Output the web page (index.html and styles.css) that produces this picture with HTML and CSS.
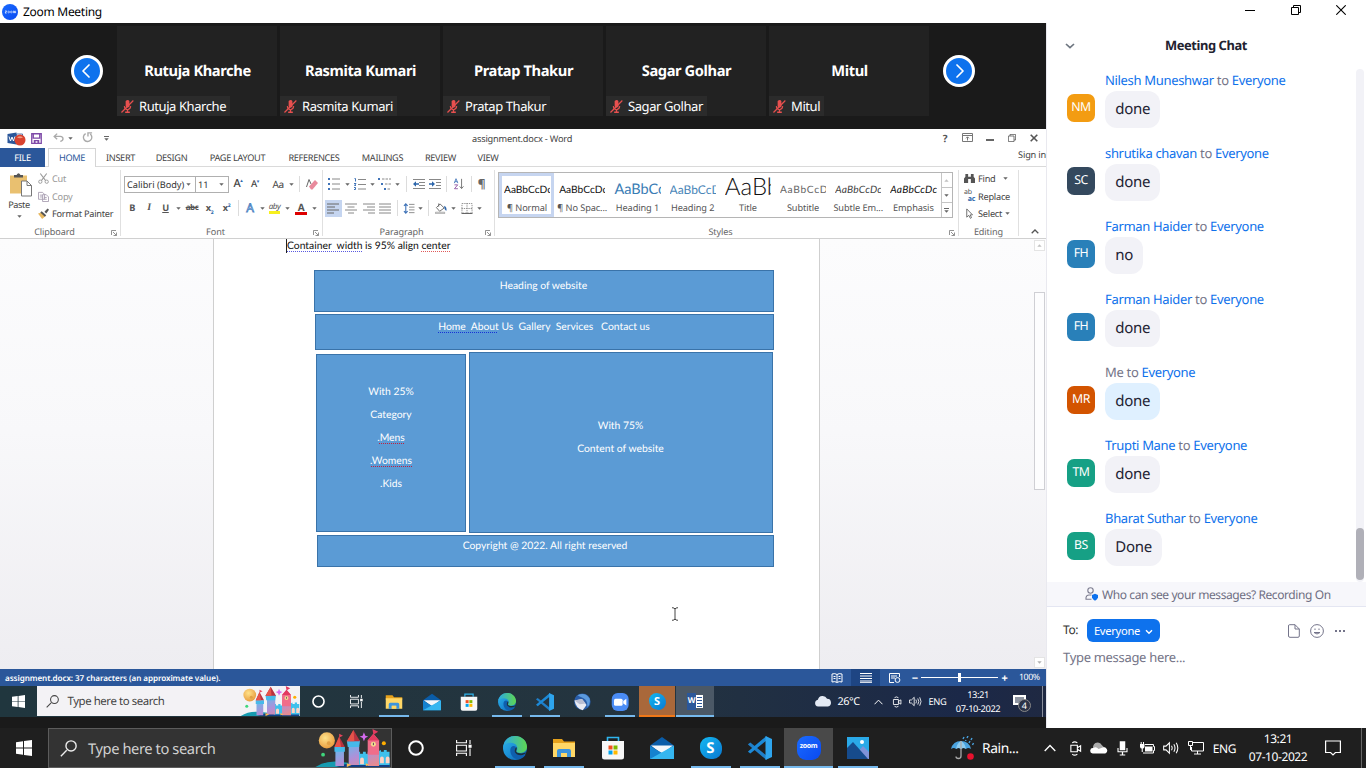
FILE: index.html
```html
<!DOCTYPE html>
<html lang="en">
<head>
<meta charset="utf-8">
<title>Zoom Meeting</title>
<link rel="stylesheet" href="styles.css">
</head>
<body>
<svg class="sprite" aria-hidden="true">
  <defs>
    <linearGradient id="gEdge" x1="0" y1="0" x2="1" y2="1"><stop offset="0" stop-color="#2fb4e8"/><stop offset=".5" stop-color="#1b8fd6"/><stop offset="1" stop-color="#0d57a5"/></linearGradient>
    <linearGradient id="gEdge2" x1="0" y1="0" x2="1" y2="0"><stop offset="0" stop-color="#2aa9e6"/><stop offset="1" stop-color="#5fd650"/></linearGradient>
    <linearGradient id="gZoom" x1="0" y1="0" x2="1" y2="1"><stop offset="0" stop-color="#1a6bff"/><stop offset="1" stop-color="#0a49f0"/></linearGradient>
    <linearGradient id="gTower" x1="0" y1="0" x2="1" y2="1"><stop offset="0" stop-color="#5bc0ef"/><stop offset=".5" stop-color="#b08fd8"/><stop offset="1" stop-color="#f08a84"/></linearGradient>
    <radialGradient id="gMoon" cx=".4" cy=".35" r=".7"><stop offset="0" stop-color="#ffe28a"/><stop offset="1" stop-color="#e79a3c"/></radialGradient>
  </defs>
  <symbol id="win" viewBox="0 0 16 16"><path fill="#fff" d="M0 2.3 7 1.3V7.6H0zM8 1.1 16 0V7.6H8zM0 8.4H7V14.7L0 13.7zM8 8.4H16V16L8 14.9z"/></symbol>
  <symbol id="mag" viewBox="0 0 16 16"><path fill="none" stroke="currentColor" stroke-width="1.3" d="M6.3 9.7 .8 15.2M15.2 5.6a4.8 4.8 0 1 1-9.6 0a4.8 4.8 0 1 1 9.6 0"/></symbol>
  <symbol id="ring" viewBox="0 0 16 16"><circle cx="8" cy="8" r="6.8" fill="none" stroke="#fff" stroke-width="2"/></symbol>
  <symbol id="tview" viewBox="0 0 16 16"><path fill="none" stroke="#fff" stroke-width="1.1" d="M.6 0V2.8H10.4V0M.6 5.2H10.4V11H.6zM.6 16V13.3H10.4V16M14 0V4M14 8.5V16"/><path fill="#fff" d="M12.5 4.7H15.6V7.8H12.5z"/></symbol>
  <symbol id="castle" viewBox="0 0 78 40">
    <path fill="#169bb0" d="M0 40Q12 32 30 35T78 36V40z"/><path fill="#123f86" d="M22 40Q40 33 60 35L78 33V40z"/>
    <circle cx="12" cy="12" r="8.5" fill="url(#gMoon)"/><circle cx="14" cy="15" r="2" fill="#e0a045"/>
    <path fill="#3fc0ec" d="M44 24h3v2h3v-2h3v2h3v-2h9l4-2v2h3v-2h3v2h3v14H44z"/><path fill="#ffd2c4" d="M68 36v-5a2 2 0 0 1 4 0v5zM74 36v-5a2 2 0 0 1 4 0v5zM47 37v-5a2 2 0 0 1 4 0v5z"/>
    <path fill="url(#gTower)" d="M21 22h9v17h-9zM35 18h11v20H35zM55 24h12v15H55z"/>
    <path fill="#47b9ea" d="M20 19h11v5H20zM33 12h14l-1 7H34z"/>
    <path fill="#b83240" d="M25 8 31 19H20zM40 1 47 13H33z"/><path fill="#e6534a" d="M25 8 27 19H20zM40 1 41 13H33z"/>
    <path fill="#f06d8a" d="M55 12 61 5 67 12V27H55z"/><path fill="#e23b5f" d="M55 12 61 5 67 12zM60 0l6 3-5 3z"/><path fill="#e8455c" d="M25 5l4 2-4 2z"/>
    <circle cx="61" cy="16" r="2.6" fill="#f5dc8d"/><path stroke="#39305c" stroke-width=".9" d="M61 14.5V17"/>
    <path fill="#d66bf0" d="M51 3.5 52.5 7 55.5 8 52.5 9.5 51 13 49.7 9.5 46.5 8 49.7 7z"/>
    <circle cx="72" cy="15" r="2.1" fill="#ffae00"/><circle cx="8" cy="27" r="2" fill="#3fd77c"/><path fill="#fdbb4c" d="M33 36l5 2-5 2zM53 36l4 2-4 1z"/>
  </symbol>
  <symbol id="edge" viewBox="0 0 24 24"><circle cx="12" cy="12" r="12" fill="url(#gEdge)"/><path fill="url(#gEdge2)" d="M.3 10.5C1.4 4 6.300 0 12 0c7 0 12 5 12 10.800 0 4-3 6.200-6.500 6.200-2.500 0-4.500-1-4-2 1.500-2 1-5.500-1.500-7C8.500 6 2.500 6.500.3 10.500z"/><path fill="#0f5fae" d="M7.300 14C7 19 11 23.700 16 23.300c3-.6 5.500-2.700 6.800-4.800-4 1.500-8.500 1-10.300-1.500-1.500-2-1-4 .5-6C10.500 9 7.500 10.500 7.300 14z"/><path fill="#1d1d1d" fill-opacity=".8" d="M13.300 11c1.500 2-.8 3.500.2 5 2 2 7 1.800 9.700.3-.7 1.700-3 3.200-6 3-3.500-.3-6-2.500-5.500-5.300.2-1.200.8-2.200 1.600-3z"/></symbol>
  <symbol id="folder" viewBox="0 0 24 24"><path fill="#e5a11c" d="M1 3h9l2 2.500h11V9H1z"/><path fill="#ffd766" d="M1 7h22v14H1z"/><path fill="#3d94dc" d="M5 21v-6q0-2 2-2h10q2 0 2 2v6h-4v-4H9v4z"/><path fill="#ffd766" d="M9 17h6v4H9z"/></symbol>
  <symbol id="store" viewBox="0 0 24 24"><path fill="none" stroke="#2fb5ee" stroke-width="1.6" d="M6.500 5V1.500h11V5"/><path fill="#f7f7f7" d="M1 5h22v16q0 2.500-2.500 2.500h-17Q1 23.500 1 21z"/><path fill="#f25022" d="M7.500 9.500h4v4h-4z"/><path fill="#7fba00" d="M12.500 9.500h4v4h-4z"/><path fill="#00a4ef" d="M7.500 14.500h4v4h-4z"/><path fill="#ffb900" d="M12.500 14.500h4v4h-4z"/></symbol>
  <symbol id="mail" viewBox="0 0 24 24"><path fill="#0a5ca8" d="M0 9.500 12 1 24 9.500V13H0z"/><path fill="#f2f6fa" d="M1 9.500h22L12 18z"/><path fill="#1582cf" d="M0 10 13 17.500 24 23H0z"/><path fill="#35b6f0" d="M0 23 24 9.500V23z"/></symbol>
  <symbol id="code" viewBox="0 0 24 24"><path fill="#1f7fc9" d="M0 8.200 2.300 6.500 18.500 19.500V24L.3 8.800z"/><path fill="#1c8ad8" d="M0 15.800 2.300 17.500 18.500 4.500V0L.3 15.200z"/><path fill="#2ea5ee" d="M17.500 0 24 3V21L17.500 24z"/></symbol>
  <symbol id="zoomcam" viewBox="0 0 24 24"><rect x="1" width="22.500" height="24" rx="8" fill="#4a8cf5"/><rect x="4" y="7.500" width="11.500" height="9.500" rx="2" fill="#fff"/><path fill="#fff" d="M16.300 10.500 20.500 7.800V16.700L16.300 14z"/></symbol>
  <symbol id="photos" viewBox="0 0 24 24"><path fill="#2aa9e8" d="M1 1h22v22H1z"/><path fill="#7f92d8" d="M9 19 17 10 23 16V23H9z"/><path fill="#164b8c" d="M1 12 7 6 22 23H1z"/><circle cx="16" cy="6" r="2" fill="#fff"/></symbol>
  <symbol id="bird" viewBox="0 0 24 24"><circle cx="12.500" cy="11.500" r="11" fill="#2a5da8"/><path fill="#5b9ade" d="M6 3Q16-2 22 7q2 7-3 12 1-9-5-12T6 3z"/><path fill="#e8eaf2" d="M2 10 12 8l6 8-5 7Q4 21 2 10z"/><path fill="#b9bed2" d="M2 10l7 5 8-1-5-6z"/></symbol>
  <symbol id="cloud" viewBox="0 0 20 14"><path fill="#e4eaf4" d="M4.500 12.500a3.800 3.800 0 0 1-.2-7.500A5.500 5.500 0 0 1 14.500 4a4.300 4.300 0 0 1 1 8.500z"/></symbol>
  <symbol id="onedrive" viewBox="0 0 20 14"><path fill="#aaa" d="M4 8A5 5 0 0 1 13 3l4 4-7 4z"/><path fill="#fff" d="M3 12.500a3 3 0 0 1 .5-6Q7 4.500 9.500 7.500L14 6a3.500 3.500 0 0 1 3 6.500z"/></symbol>
  <symbol id="up" viewBox="0 0 12 8"><path fill="none" stroke="#fff" stroke-width="1.300" d="M.7 7 6 1.500 11.300 7"/></symbol>
  <symbol id="meet" viewBox="0 0 14 16"><path fill="none" stroke="#fff" stroke-width="1.200" d="M2 4.500h7v7H2zM9 7.200 12.500 5v6L9 8.800M3.500 2Q6-.3 9 2M3.500 14Q6 16.300 9 14"/></symbol>
  <symbol id="sound" viewBox="0 0 17 14"><path fill="none" stroke="#fff" stroke-width="1.100" d="M.7 5h2.500L6.800 1.500v11L3.200 9H.7zM9 4.500q1.500 2.500 0 5M11.500 3q2.500 4 0 8M14 1.500q3.500 5.500 0 11"/></symbol>
  <symbol id="notif" viewBox="0 0 16 16"><path fill="none" stroke="#fff" stroke-width="1.200" d="M.6 1h14.800v11.500h-5L8 15 5.600 12.500h-5z"/></symbol>
  <symbol id="mute" viewBox="0 0 14 14"><path fill="#e8504f" d="M5 1q2.500-2 4 0l.2 6Q7 9.500 5 7zM3 6.500h1Q5 10 7 10t3-3.500h1Q11 10 7.700 11v1.500H9.500V14H4.500V12.500H6.300V11Q3 10 3 6.500z"/><path stroke="#e8504f" stroke-width="1.300" d="M.5 13.500 13.300.5"/></symbol>
  <symbol id="launch" viewBox="0 0 6 6"><path fill="none" stroke="#777" stroke-width=".8" d="M.5 5V.5H5M2 2 5.300 5.300M5.500 2.500V5.500H2.500"/></symbol>
  <symbol id="car" viewBox="0 0 5 3"><path fill="#666" d="M.3.3H4.700L2.500 2.700z"/></symbol>
  <symbol id="save" viewBox="0 0 12 12"><path fill="none" stroke="#7e4aa8" stroke-width="1.400" d="M.8.8H11.200V11.200H.8zM2.500 1V5.500H9.500V1"/><path fill="#7e4aa8" d="M3 7.500h6V11H7V9H5v2H3z"/></symbol>
  <symbol id="undo" viewBox="0 0 12 10"><path fill="none" stroke="#aaa" stroke-width="1.500" d="M4.500.7 1.200 3.800 4.500 7M1.500 3.800H8q3 .3 3 2.700T8 9.300"/></symbol>
  <symbol id="redo" viewBox="0 0 12 12"><path fill="none" stroke="#aaa" stroke-width="1.500" d="M4 1.700A4.600 4.600 0 1 0 9 2.200M6.500 5V1H11"/></symbol>
  <symbol id="paste" viewBox="0 0 24 24"><path fill="#e9c070" d="M1 3H18V21H1z"/><path fill="#555" d="M5 5V2.500H7.500Q9.500-1 11.500 2.500H14V5z"/><path fill="#fff" stroke="#777" d="M12.500 8.500H18L22.500 13V23.500H12.500zM18 8.500V13H22.500"/></symbol>
  <symbol id="word" viewBox="0 0 18 14"><path fill="#2b579a" d="M0 2 9 .5v12L0 11z"/><path fill="#fff" stroke="#2b579a" stroke-width=".8" d="M9 2h6v10H9z"/><path fill="none" stroke="#fff" stroke-width="1" d="M1.500 4.500 3 9 4.500 5 6 9 7.500 4.500"/><circle cx="12.500" cy="8" r="5.500" fill="#d9432f"/><path fill="#f09a80" d="M9.500 5.500q3-2.500 6 0-3 1.500-6 0z"/></symbol>
  <symbol id="cut" viewBox="0 0 12 12"><path fill="none" stroke="#9a9a9a" stroke-width="1.200" d="M2.500.5 8.300 8.300M9.500.5 3.700 8.300"/><circle cx="2.500" cy="9.500" r="1.800" fill="none" stroke="#9a9a9a"/><circle cx="9.500" cy="9.500" r="1.800" fill="none" stroke="#9a9a9a"/></symbol>
  <symbol id="copy" viewBox="0 0 12 12"><path fill="#fff" stroke="#aaa0b2" d="M.5 1.500H5L7 3.500V9H.5zM5 4H9L11.500 6.500V11.500H5z"/><path stroke="#aaa0b2" d="M2 4.500h3M2 6.500h3M6.500 7h3M6.500 9h3"/></symbol>
  <symbol id="brush" viewBox="0 0 12 12"><path fill="#e8b860" d="M0 6 4 5 8 9 4.500 12z"/><path fill="#555" d="M4 3.500 9 8 7.500 9.500 2.500 5z"/><path fill="#555" d="M7 4 10.500.5 12 2 9 6z"/></symbol>
  <symbol id="list" viewBox="0 0 12 12"><path fill="#3f73b8" d="M0 0h2v2H0zM0 5h2v2H0zM0 10h2v2H0z"/><path stroke="#888" d="M4 1h8M4 6h8M4 11h8"/></symbol>
  <symbol id="numlist" viewBox="0 0 12 12"><path fill="none" stroke="#3f73b8" d="M.5.5H1.500V3.500M0 5.500H2L.5 7.500H2M0 9.500H1.500V11.500H0"/><path stroke="#888" d="M4 1.500h8M4 6.500h8M4 11h8"/></symbol>
  <symbol id="multi" viewBox="0 0 14 12"><path fill="#3f73b8" d="M0 0h2v2H0zM3 5h2v2H3zM6 10h2v2H6z"/><path stroke="#888" d="M4 1h9M7 6h6M9.500 11H13" stroke-dasharray="2.500 1"/></symbol>
  <symbol id="dent" viewBox="0 0 12 10"><path stroke="#888" d="M0 .5h12M6 3.500h6M6 6.500h6M0 9.500h12"/><path fill="#2d66ab" d="M0 5 3 2.300V4.200H6V5.800H3V7.700z"/></symbol>
  <symbol id="indent" viewBox="0 0 12 10"><path stroke="#888" d="M0 .5h12M7 3.500h5M7 6.500h5M0 9.500h12"/><path fill="#2d66ab" d="M6 5 3 2.300V4.200H0V5.800H3V7.700z"/></symbol>
  <symbol id="sort" viewBox="0 0 12 14"><path fill="none" stroke="#3f73b8" d="M.5 6 2.500.8 4.700 6M1.300 4.300H4"/><path fill="none" stroke="#8a4b9e" d="M.7 8H4.500L.7 12.500H4.700"/><path fill="none" stroke="#666" d="M9 1V12M6.800 9.800 9 12.300 11.200 9.800"/></symbol>
  <symbol id="al" viewBox="0 0 12 10"><path stroke="#666" d="M0 .5h12M0 3.500h8M0 6.500h12M0 9.500h7"/></symbol>
  <symbol id="ac" viewBox="0 0 12 10"><path stroke="#888" d="M0 .5h12M2.500 3.500h7M0 6.500h12M3 9.500h6"/></symbol>
  <symbol id="ar" viewBox="0 0 12 10"><path stroke="#888" d="M0 .5h12M4 3.500h8M0 6.500h12M5 9.500h7"/></symbol>
  <symbol id="aj" viewBox="0 0 12 10"><path stroke="#888" d="M0 .5h12M0 3.500h12M0 6.500h12M0 9.500h12"/></symbol>
  <symbol id="space" viewBox="0 0 12 12"><path fill="none" stroke="#3f73b8" stroke-width="1.200" d="M2.500 1V11M.5 3.200 2.500 1 4.500 3.200M.5 8.800 2.500 11 4.500 8.800"/><path stroke="#888" d="M6 1.500h6M6 4.500h6M6 7.500h6M6 10.500h6"/></symbol>
  <symbol id="bucket" viewBox="0 0 13 12"><path fill="#fff" stroke="#666" d="M5.500 1 10 5.500 5 9 1.500 5zM4 4V.5"/><path fill="#2d66ab" d="M10 3q3 1 2.500 5.500Q10 8 10 3z"/><path fill="#ddd" stroke="#888" stroke-width=".6" d="M.5 10h10v1.700H.5z"/></symbol>
  <symbol id="border" viewBox="0 0 12 12"><path fill="none" stroke="#888" stroke-dasharray="1.500 1" d="M.5.5H11.500V11H.5zM6 0V11M0 6H12"/><path stroke="#555" d="M0 11.500H12"/></symbol>
  <symbol id="eraser" viewBox="0 0 12 12"><path fill="none" stroke="#666" d="M.5 9 3 1.500 5 6"/><path fill="#e88a9c" d="M3 8.500 9 2l3 3L6.500 11.500H5z"/></symbol>
  <symbol id="find" viewBox="0 0 12 10"><path fill="#555" d="M1.500 0h3v3h3V0h3v3L12 5v5H7.500V5.500h-3V10H0V5l1.500-2z"/></symbol>
  <symbol id="arrow" viewBox="0 0 8 12"><path fill="#fff" stroke="#666" d="M1 1V10L3.200 8 5 11.300 6.200 10.500 4.700 7.500H7.300z"/></symbol>
  <symbol id="ribopt" viewBox="0 0 11 9"><path fill="none" stroke="#777" d="M.5.5h10v8H.5zM.5 2.500h10M5.500 7.500V4M4 5.300 5.500 3.800 7 5.300"/></symbol>
  <symbol id="restore" viewBox="0 0 10 10"><path fill="none" stroke="currentColor" d="M.5 2.500h7v7h-7zM2.500 2.500v-2h7v7h-2"/></symbol>
  <symbol id="close" viewBox="0 0 10 10"><path fill="none" stroke="currentColor" stroke-width="1.100" d="M.3.3 9.700 9.700M9.700.3.3 9.700"/></symbol>
</svg>

<header class="titlebar">
  <svg class="i16" viewBox="0 0 24 24"><circle cx="12" cy="12" r="12" fill="url(#gZoom)"/><path fill="none" stroke="#dfe8ff" stroke-width="1.300" d="M4.500 10.500H7L4.500 13.500H7M17 13.700V10.700Q18.200 10 18.700 11V13.700M18.700 11Q20 10 20.400 11V13.700"/><circle cx="10" cy="12" r="1.300" fill="none" stroke="#dfe8ff"/><circle cx="14" cy="12" r="1.300" fill="none" stroke="#dfe8ff"/></svg>
  <span class="titlebar-name">Zoom Meeting</span>
  <div class="winctl"><i class="min"></i><svg class="i10"><use href="#restore"/></svg><svg class="i10"><use href="#close"/></svg></div>
</header>

<main class="main">
<section class="share">
  <div class="strip">
    <button class="nav nav-l"><svg viewBox="0 0 10 14"><path d="M8 1 2 7 8 13"/></svg></button>
    <div class="tiles">
      <div class="tile"><b>Rutuja Kharche</b><span><svg><use href="#mute"/></svg>Rutuja Kharche</span></div>
      <div class="tile"><b>Rasmita Kumari</b><span><svg><use href="#mute"/></svg>Rasmita Kumari</span></div>
      <div class="tile"><b>Pratap Thakur</b><span><svg><use href="#mute"/></svg>Pratap Thakur</span></div>
      <div class="tile"><b>Sagar Golhar</b><span><svg><use href="#mute"/></svg>Sagar Golhar</span></div>
      <div class="tile"><b>Mitul</b><span><svg><use href="#mute"/></svg>Mitul</span></div>
    </div>
    <button class="nav nav-r"><svg viewBox="0 0 10 14"><path d="M2 1 8 7 2 13"/></svg></button>
  </div>

  <div class="word">
    <div class="qat">
      <svg class="q-word"><use href="#word"/></svg><svg class="q-save"><use href="#save"/></svg><svg class="q-undo"><use href="#undo"/></svg><svg class="car"><use href="#car"/></svg><svg class="q-redo"><use href="#redo"/></svg><span class="q-more"><u></u><svg class="car"><use href="#car"/></svg></span>
      <span class="doc-title">assignment.docx - Word</span>
      <div class="wctl"><b>?</b><svg class="ro"><use href="#ribopt"/></svg><i></i><svg class="rs"><use href="#restore"/></svg><svg class="cl" viewBox="0 0 8 8"><path d="M.7.7 7.300 7.300M7.300.7.7 7.300"/></svg></div>
    </div>
    <nav class="tabs">
      <span class="file">FILE</span><span class="home">HOME</span><span>INSERT</span><span>DESIGN</span><span>PAGE LAYOUT</span><span>REFERENCES</span><span>MAILINGS</span><span>REVIEW</span><span>VIEW</span><span class="signin">Sign in</span>
    </nav>
    <div class="ribbon">
      <div class="grp g-clip">
        <div class="body clip">
          <div class="paste"><svg><use href="#paste"/></svg><span>Paste</span><svg class="car"><use href="#car"/></svg></div>
          <div class="cmds"><div class="dim"><svg><use href="#cut"/></svg>Cut</div><div class="dim"><svg><use href="#copy"/></svg>Copy</div><div><svg><use href="#brush"/></svg>Format Painter</div></div>
        </div>
        <footer>Clipboard<svg><use href="#launch"/></svg></footer>
      </div>
      <div class="grp g-font">
        <div class="body rows">
          <div class="frow1">
            <span class="combo">Calibri (Body)<svg class="car"><use href="#car"/></svg></span><span class="combo">11<svg class="car"><use href="#car"/></svg></span>
            <span class="grow">A<sup>▴</sup></span><span class="grow sm">A<sup>▾</sup></span><span class="aa">Aa</span><svg class="car"><use href="#car"/></svg><i class="vr"></i><svg class="i12"><use href="#eraser"/></svg>
          </div>
          <div class="frow2">
            <b>B</b><b class="it">I</b><b class="un">U</b><svg class="car"><use href="#car"/></svg><b class="st">abc</b><b>x<sub>2</sub></b><b>x<sup>2</sup></b><i class="vr"></i><span class="fx">A</span><svg class="car"><use href="#car"/></svg><span class="hl">aby</span><svg class="car"><use href="#car"/></svg><b class="fc">A</b><svg class="car"><use href="#car"/></svg>
          </div>
        </div>
        <footer>Font<svg><use href="#launch"/></svg></footer>
      </div>
      <div class="grp g-para">
        <div class="body rows">
          <div class="prow1">
            <svg class="i12"><use href="#list"/></svg><svg class="car"><use href="#car"/></svg><svg class="i12"><use href="#numlist"/></svg><svg class="car"><use href="#car"/></svg><svg class="i14"><use href="#multi"/></svg><svg class="car"><use href="#car"/></svg><i class="vr"></i><svg class="i12"><use href="#dent"/></svg><svg class="i12"><use href="#indent"/></svg><i class="vr"></i><svg class="i12"><use href="#sort"/></svg><i class="vr"></i><b class="pil">¶</b>
          </div>
          <div class="prow2">
            <span class="on"><svg class="i12"><use href="#al"/></svg></span><svg class="i12"><use href="#ac"/></svg><svg class="i12"><use href="#ar"/></svg><svg class="i12"><use href="#aj"/></svg><i class="vr"></i><svg class="i12"><use href="#space"/></svg><svg class="car"><use href="#car"/></svg><i class="vr"></i><svg class="i12"><use href="#bucket"/></svg><svg class="car"><use href="#car"/></svg><svg class="i12"><use href="#border"/></svg><svg class="car"><use href="#car"/></svg>
          </div>
        </div>
        <footer>Paragraph<svg><use href="#launch"/></svg></footer>
      </div>
      <div class="grp g-style">
        <div class="body">
          <div class="gallery">
            <div class="st-cell sel"><p>AaBbCcDc</p><span>¶ Normal</span></div>
            <div class="st-cell"><p>AaBbCcDc</p><span>¶ No Spac...</span></div>
            <div class="st-cell"><p class="h1">AaBbCc</p><span>Heading 1</span></div>
            <div class="st-cell"><p class="h2">AaBbCcD</p><span>Heading 2</span></div>
            <div class="st-cell"><p class="tt">AaBb</p><span>Title</span></div>
            <div class="st-cell"><p class="sb">AaBbCcD</p><span>Subtitle</span></div>
            <div class="st-cell"><p class="se">AaBbCcDc</p><span>Subtle Em...</span></div>
            <div class="st-cell"><p class="em">AaBbCcDc</p><span>Emphasis</span></div>
            <div class="gscroll"><i><svg class="car flip"><use href="#car"/></svg></i><i><svg class="car"><use href="#car"/></svg></i><i><u></u><svg class="car"><use href="#car"/></svg></i></div>
          </div>
        </div>
        <footer>Styles<svg><use href="#launch"/></svg></footer>
      </div>
      <div class="grp g-edit">
        <div class="body"><div class="cmds"><div><svg><use href="#find"/></svg>Find<svg class="car far"><use href="#car"/></svg></div><div><em><span>ab</span><b>ac</b></em>Replace</div><div><svg><use href="#arrow"/></svg>Select<svg class="car"><use href="#car"/></svg></div></div></div>
        <footer>Editing</footer>
      </div>
      <div class="collapse"><svg viewBox="0 0 8 5"><path d="M.7 4.300 4 1 7.300 4.300"/></svg></div>
    </div>

    <div class="canvas">
      <article class="page">
        <p class="lead"><span class="gram">Container&nbsp; width</span> is 95% align <span class="spell">center</span></p>
        <div class="box b-head">Heading of website</div>
        <div class="box b-nav"><span class="gram2">Home&nbsp; About</span> Us&nbsp; Gallery&nbsp; Services&nbsp;&nbsp; Contact us</div>
        <div class="cols">
          <div class="box b-side"><p>With 25%</p><p>Category</p><p>.<span class="spell2">Mens</span></p><p>.<span class="spell2">Womens</span></p><p>.Kids</p></div>
          <div class="box b-main"><p>With 75%</p><p>Content of website</p></div>
        </div>
        <div class="box b-foot">Copyright @ 2022. All right reserved</div>
      </article>
      <div class="vscroll"><i class="sq"><svg class="car flip"><use href="#car"/></svg></i><i class="thumb"></i><i class="sq"><svg class="car dimmed"><use href="#car"/></svg></i></div>
      <svg class="ibeam" viewBox="0 0 8 14"><path d="M1 .7Q3.500.7 4 2 4.500.7 7 .7M4 2V12M1 13.300Q3.500 13.300 4 12 4.500 13.300 7 13.300"/></svg>
    </div>
    <div class="status"><b>assignment.docx: 37 characters (an approximate value).</b>
      <span class="v"><svg viewBox="0 0 12 10"><path d="M1 1q3-1 5 .5Q8 0 11 1V9Q8 8 6 9.500 4 8 1 9zM6 1.500V9M2.500 3.500h2M2.500 5.500h2M7.500 3.500h2M7.500 5.500h2"/></svg></span>
      <span class="v act"><svg viewBox="0 0 12 10"><path d="M0 .5H12M0 3H12M0 5.500H12M0 8H12M0 9.700H12"/></svg></span>
      <span class="v"><svg viewBox="0 0 12 10"><path d="M10.500 4V.500H.5v9H5M2 3h6M2 5h4"/><circle cx="8.500" cy="7" r="2.400"/></svg></span>
      <b class="zm">−</b><i class="slider"></i><b class="zm">+</b><span class="pct">100%</span>
    </div>
  </div>

  <div class="tb1">
    <div class="start"><svg><use href="#win"/></svg></div>
    <div class="search"><svg class="m"><use href="#mag"/></svg><span>Type here to search</span><svg class="castle" preserveAspectRatio="none"><use href="#castle"/></svg></div>
    <div class="apps">
      <a><svg class="s13"><use href="#ring"/></svg></a><a><svg class="s13"><use href="#tview"/></svg></a><a class="run"><svg><use href="#folder"/></svg></a><a><svg><use href="#mail"/></svg></a><a><svg><use href="#store"/></svg></a><a class="run"><svg><use href="#edge"/></svg></a><a class="run"><svg><use href="#code"/></svg></a><a><svg><use href="#bird"/></svg></a><a class="run"><svg><use href="#zoomcam"/></svg></a><a class="alert"><span class="skype">S</span></a><a class="cur"><span class="wordapp"><b>W</b><i></i></span></a>
    </div>
    <div class="tray"><svg class="w18"><use href="#cloud"/></svg><span>26°C</span><svg class="w10"><use href="#up"/></svg><svg class="w12"><use href="#meet"/></svg><svg class="w13"><use href="#sound"/></svg><span class="eng">ENG</span><span class="clock">13:21<br>07-10-2022</span><div class="bell"><svg viewBox="0 0 14 14"><path fill="#fff" d="M0 0h13v10H8.500L6.500 12.500V10H0z"/><path stroke="#1d2b44" d="M2 3h9M2 5h9M2 7h6"/></svg><em>4</em></div><i class="peek"></i></div>
  </div>
</section>

<aside class="chat">
  <div class="chat-head"><svg viewBox="0 0 10 6"><path d="M1 1 5 4.700 9 1"/></svg><b>Meeting Chat</b></div>
  <div class="feed">
    <div class="list">
      <div class="msg"><i class="av a1">NM</i><div><p><a>Nilesh Muneshwar</a> to <a>Everyone</a></p><span>done</span></div></div>
      <div class="msg"><i class="av a2">SC</i><div><p><a>shrutika chavan</a> to <a>Everyone</a></p><span>done</span></div></div>
      <div class="msg"><i class="av a3">FH</i><div><p><a>Farman Haider</a> to <a>Everyone</a></p><span>no</span></div></div>
      <div class="msg"><i class="av a3">FH</i><div><p><a>Farman Haider</a> to <a>Everyone</a></p><span>done</span></div></div>
      <div class="msg me"><i class="av a4">MR</i><div><p>Me to <a>Everyone</a></p><span>done</span></div></div>
      <div class="msg"><i class="av a5">TM</i><div><p><a>Trupti Mane</a> to <a>Everyone</a></p><span>done</span></div></div>
      <div class="msg"><i class="av a5">BS</i><div><p><a>Bharat Suthar</a> to <a>Everyone</a></p><span>Done</span></div></div>
    </div>
    <div class="track"><i></i></div>
  </div>
  <div class="info"><svg viewBox="0 0 14 14"><circle cx="5.500" cy="3.500" r="2.700"/><path d="M6.500 12.300H1V10.500Q1.500 8 4 8h2.500"/><path class="sh" d="M10 6.700 13 8v2.500Q12.500 12.500 10 13.700 7.500 12.500 7 10.500V8z"/></svg>Who can see your messages? Recording On</div>
  <div class="to"><span>To:</span><button>Everyone<svg viewBox="0 0 8 6"><path d="M1 1.200 4 4.200 7 1.200"/></svg></button>
    <div class="tools"><svg viewBox="0 0 14 14"><path d="M2.500.7H8L12.300 5V12Q12.300 13.300 11 13.300H3Q1.500 13.300 1.500 12V2Q1.500.7 2.500.7zM8 .7V5H12.300"/></svg><svg viewBox="0 0 14 14"><circle cx="7" cy="7" r="6.400"/><path d="M4 8.500Q7 11.500 10 8.500zM5 4.500V6M9 4.500V6"/></svg><svg viewBox="0 0 14 14"><path class="d" d="M2 6h2v2H2zM6 6h2v2H6zM10 6h2v2h-2z"/></svg></div></div>
  <div class="ph">Type message here...</div>
</aside>
</main>

<footer class="tb2">
  <div class="start"><svg><use href="#win"/></svg></div>
  <div class="search"><svg class="m"><use href="#mag"/></svg><span>Type here to search</span><svg class="castle" preserveAspectRatio="none"><use href="#castle"/></svg></div>
  <div class="apps">
    <a><svg class="s16"><use href="#ring"/></svg></a><a><svg class="s16"><use href="#tview"/></svg></a><a class="run"><svg><use href="#edge"/></svg></a><a class="run"><svg><use href="#folder"/></svg></a><a><svg><use href="#store"/></svg></a><a><svg><use href="#mail"/></svg></a><a class="run"><span class="skype">S</span></a><a class="run"><svg><use href="#code"/></svg></a><a class="cur"><span class="zoomapp">zoom</span></a><a class="run"><svg><use href="#photos"/></svg></a>
  </div>
  <div class="tray">
    <svg class="w24" viewBox="0 0 24 24"><path fill="#4aa3e0" d="M0 13Q2 5 10 5T20 13Q17 11 15 13 12.500 11 10 13 7.500 11 5 13 3 11 0 13z"/><path fill="#8ccbf0" d="M5 13Q6 7 10 5 14 7 15 13 12.500 11 10 13 7.500 11 5 13z"/><path fill="none" stroke="#aaa" stroke-width="1.300" d="M10 5V20Q10 22.500 7.500 22.500T5 20.500"/><path stroke="#4aa3e0" stroke-width="1.400" d="M13 1l-1 2M17 0l-1 2M21 2l-1 2M19 5l-1 2M22.500 7l-1 2M15 4l-.5 1"/><circle cx="19.500" cy="20.500" r="3.300" fill="#e8112d"/></svg>
    <span class="rain">Rain...</span><svg class="w12"><use href="#up"/></svg><svg class="w13"><use href="#meet"/></svg><svg class="w18"><use href="#onedrive"/></svg>
    <svg class="w12t" viewBox="0 0 12 16"><path fill="#fff" d="M3 0h6v10H3zM.500 7.500h1.200V11h8.600V7.500H11.500V12.200H6.700V14.500H9V15.700H3V14.500H5.300V12.200H.500z"/></svg>
    <svg class="w16" viewBox="0 0 16 12"><path fill="#fff" d="M6 4.500h7.500v5H6zM1 2h4.500v3q-.5 1.500-1.700 1.500V10H2.700V6.500Q1.500 6.500 1 5zM1.700 0h1v2h-1zM4 0h1v2H4z"/><path fill="none" stroke="#fff" d="M6 2.500h8.500v2h1v4h-1v2.500H4"/></svg>
    <svg class="w16"><use href="#sound"/></svg>
    <svg class="w16" viewBox="0 0 16 14"><path fill="none" stroke="#fff" d="M5 1.500H15.500V10H3.500V6M.5.500h4v4h-4zM2.500 5V9M6 13h7M9.500 10V13"/></svg>
    <span class="eng">ENG</span><span class="clock">13:21<br>07-10-2022</span><svg class="w16"><use href="#notif"/></svg><i class="peek"></i>
  </div>
</footer>
</body>
</html>
```
FILE: styles.css
```css
* { box-sizing: border-box; margin: 0; padding: 0; }
body {
  width: 1366px; height: 768px; overflow: hidden;
  display: flex; flex-direction: column;
  font-family: "Noto Sans", sans-serif; letter-spacing: -0.026em;
  text-rendering: geometricPrecision; background: #fff; color: #222;
}
svg { display: block; flex: none; }
i, em { font-style: normal; }
u { text-decoration: none; }
.sprite { position: absolute; width: 0; height: 0; }
.i10 { width: 10px; height: 10px; }
.i12 { width: 12px; height: 12px; }
.i14 { width: 14px; height: 12px; }
.i16 { width: 16px; height: 16px; }
.car { width: 5px; height: 3px; }
.flip { transform: scaleY(-1); opacity: .4; }
.dimmed { opacity: .5; }
.vr { width: 1px; height: 16px; background: #dcdcdc; }

/* title bar */
.titlebar { height: 23px; flex: none; display: flex; align-items: center; padding-left: 2px; color: #000; }
.titlebar-name { font-size: 12px; margin-left: 5px; letter-spacing: -.024em; }
.winctl { margin-left: auto; width: 121px; height: 20px; display: flex; align-items: center; justify-content: space-between; padding-right: 20px; align-self: flex-start; }
.winctl .min { width: 10px; height: 1px; background: #000; }

.main { flex: none; height: 705px; display: flex; }
.share { width: 1046px; height: 705px; background: #1a1a1a; display: flex; flex-direction: column; }

/* participants */
.strip { height: 106px; flex: none; display: flex; padding-top: 3px; }
.nav { width: 32px; height: 32px; margin-top: 29px; border: 3px solid #fff; border-radius: 50%; background: #0e72ed; display: flex; align-items: center; justify-content: center; flex: none; }
.nav svg { width: 10px; height: 14px; fill: none; stroke: #fff; stroke-width: 1.700; stroke-linecap: round; stroke-linejoin: round; }
.nav-l { margin-left: 71px; }
.nav-l svg { margin-right: 2px; }
.nav-r { margin-left: 14px; }
.nav-r svg { margin-left: 2px; }
.tiles { display: flex; gap: 3px; margin-left: 14px; height: 90px; }
.tile { width: 160px; background: #222; display: flex; flex-direction: column; color: #fff; }
.tile b { text-align: center; font-size: 14.700px; line-height: 20px; padding: 35px 0 0 1px; height: 70px; }
.tile span { align-self: flex-start; display: flex; align-items: center; background: #2b2b2b; height: 20px; font-size: 13px; padding-right: 4px; }
.tile span svg { width: 13px; height: 13px; margin: 0 5.500px 0 3.500px; }

/* word window */
.word { background: #fff; height: 557px; flex: none; display: flex; flex-direction: column; color: #444; font-size: 9.200px; }
.qat { height: 19px; flex: none; display: grid; grid-template-columns: 26px 20px 15px 14px 21px 12px 1fr 111px; padding-left: 7px; align-items: center; justify-items: start; }
.q-word { width: 19px; height: 14px; }
.q-save { width: 11px; height: 11px; margin-left: -2px; }
.q-undo { width: 11px; height: 9px; margin-top: -2px; }
.q-redo { width: 11px; height: 11px; margin-top: -2px; }
.q-more { display: flex; flex-direction: column; gap: 1px; margin-left: 1px; }
.q-more u { width: 5px; height: 1px; background: #666; }
.doc-title { margin-left: 357px; letter-spacing: -.02em; }
.wctl { display: grid; grid-template-columns: 22px 22.500px 22.500px 22.500px 21.500px; align-items: center; justify-items: center; font-size: 10px; color: #555; margin-left: -1px; margin-top: -2px; }
.wctl .ro { width: 11px; height: 9px; }
.wctl i { width: 8px; height: 2px; background: #666; margin-top: 4px; }
.wctl .rs { width: 8px; height: 8px; }
.wctl .cl { width: 8px; height: 8px; fill: none; stroke: #555; stroke-width: 1.600; }
.tabs { height: 19px; flex: none; display: grid; grid-template-columns: 45px 53px 45px 57px 75px 78px 59px 57px 38px 1fr; text-align: center; border-bottom: 1px solid #dadada; line-height: 20px; letter-spacing: -.036em; }
.tabs .file { background: #2b579a; color: #fff; height: 19px; }
.tabs .home { color: #2b579a; border: 1px solid #d5d5d5; border-bottom: 0; background: #fff; width: 48px; margin-left: 3px; height: 19px; line-height: 18px; }
.tabs .signin { text-align: right; letter-spacing: -.02em; margin-top: -3px; }

.ribbon { height: 72px; flex: none; display: flex; border-bottom: 1px solid #d0d0d0; padding-top: 3px; }
.grp { height: 66px; border-right: 1px solid #e0e0e0; display: flex; flex-direction: column; flex: none; }
.grp .body { height: 56px; flex: none; }
.grp footer { height: 10px; line-height: 10px; text-align: center; font-size: 9.100px; color: #666; display: grid; grid-template-columns: 1fr 6px; padding: 1px 3px 0 0; letter-spacing: -.01em; }
.grp footer svg { width: 6px; height: 6px; margin-top: 3px; }
.g-clip { width: 121px; }
.g-clip footer { padding-right: 3px; }
.g-font { width: 202px; }
.g-font footer, .g-style footer { padding-right: 3px; }
.g-para footer { padding-right: 3px; text-indent: -5px; }
.g-font footer, .g-style footer { text-indent: -3px; }
.g-clip footer { text-indent: -2px; }
.g-para { width: 172px; }
.g-style { width: 464px; }
.g-edit { width: 60px; }
.g-edit footer { display: block; padding: 1px 0 0; }
.clip { display: flex; }
.paste { width: 38px; display: flex; flex-direction: column; align-items: center; padding-top: 2px; }
.paste > svg:first-child { width: 24px; height: 25px; margin-left: 4px; }
.paste span { margin-top: 1px; line-height: 14px; }
.paste .car { margin-top: 3px; }
.cmds { display: flex; flex-direction: column; }
.cmds > div { height: 17.600px; display: flex; align-items: center; gap: 3px; letter-spacing: -.026em; }
.cmds svg { width: 11px; height: 11px; }
.cmds svg.car { width: 5px; height: 3px; }
.cmds svg.far { margin-left: 4px; }
.dim { color: #999; }
.g-edit .cmds { padding-left: 5px; }
.g-edit .cmds em { font-size: 7px; width: 11px; height: 14px; color: #555; display: grid; grid-template-rows: 7px 7px; line-height: 7px; }
.g-edit .cmds em b { color: #2d66ab; text-align: right; }

.rows > div { display: grid; align-items: center; justify-items: center; height: 24px; }
.rows { padding-top: 2px; }
.rows .frow1 { grid-template-columns: 72px 33px 18px 16px 24px 8px 9px 16px; padding-left: 3px; }
.combo { width: 100%; height: 17px; border: 1px solid #b0b0b0; display: flex; align-items: center; justify-content: space-between; padding: 0 4px 0 2px; color: #333; letter-spacing: 0; }
.combo + .combo { border-left: 0; }
.grow { font-size: 11px; line-height: 12px; font-weight: 500; }
.grow.sm { font-size: 9.500px; }
.grow sup { font-size: 6px; color: #2d66ab; line-height: 0; }
.aa { font-size: 10px; margin-left: 6px; }
.frow2 { grid-template-columns: 18px 16px 17px 8px 20px 15px 19px 5px 18px 6px 19px 6px 22px 4px; padding-left: 2px; color: #555; line-height: 12px; }
.it { font-family: "Liberation Serif", serif; font-style: italic; font-size: 10px; }
.un { text-decoration: underline; }
.st { text-decoration: line-through; font-size: 8px; }
.rows sub, .rows sup { font-size: 5px; line-height: 0; color: #2d66ab; }
.fx { font-size: 12px; color: #fff; -webkit-text-stroke: .8px #4c83c3; }
.hl { font-size: 8px; line-height: 9px; font-style: italic; border-bottom: 3px solid #f7f01e; }
.fc { border-bottom: 3px solid #d00; line-height: 10px; width: 12px; text-align: center; font-size: 10px; }
.prow1 { grid-template-columns: 19px 8px 17px 8px 17px 8px 10px 15px 18px 5px 19px 6px 17px; padding-left: 1px; }
.prow2 { grid-template-columns: 18px 18px 17px 16px 8px 15px 8px 9px 16px 9px 17px 9px; padding-left: 1px; }
.prow2 svg { height: 11px; }
.prow2 svg.car { height: 3px; }
.prow2 .on { width: 17px; height: 17px; background: #c5d5f0; display: grid; place-items: center; }
.pil { font-size: 12px; line-height: 12px; color: #666; margin-left: -2px; }

.gallery { margin: 2px 5px 0 3px; height: 46px; border: 1px solid #b5b5b5; display: flex; }
.st-cell { width: 55.200px; height: 44px; text-align: center; overflow: hidden; padding: 3px 4px 0 5px; flex: none; }
.st-cell.sel { border: 3px solid #c6d5f0; padding: 0 1px 0 2px; }
.st-cell p { height: 25px; line-height: 28px; font-family: Lato, sans-serif; font-size: 10.200px; color: #111; overflow: hidden; white-space: nowrap; text-align: left; letter-spacing: 0; }
.st-cell span { display: flex; justify-content: center; line-height: 13px; font-size: 9.200px; white-space: nowrap; color: #555; letter-spacing: -.01em; }
.st-cell p.h1 { color: #3a7db5; font-size: 14.500px; }
.st-cell p.h2 { color: #4a86b8; font-size: 12px; }
.st-cell p.tt { font-size: 24px; font-weight: 300; line-height: 22px; }
.st-cell p.sb { color: #666; letter-spacing: .07em; }
.st-cell p.se { color: #444; font-style: italic; letter-spacing: .02em; }
.st-cell p.em { font-style: italic; letter-spacing: .02em; }
.gscroll { width: 12px; margin-left: auto; display: flex; flex-direction: column; border-left: 1px solid #c5c5c5; }
.gscroll i { flex: 1; display: flex; flex-direction: column; align-items: center; justify-content: center; gap: 1px; border-top: 1px solid #c5c5c5; }
.gscroll i:first-child { border-top: 0; }
.gscroll u { width: 5px; height: 1px; background: #666; }
.collapse { display: flex; align-items: flex-end; padding: 0 0 4px 12px; }
.collapse svg { width: 8px; height: 5px; fill: none; stroke: #555; stroke-width: 1.300; }

/* document */
.canvas { position: relative; height: 430px; flex: none; display: flex; background: linear-gradient(#fcfcfd, #f8f8fa 45%, #eeedf1); overflow: hidden; }
.page { width: 607px; margin-left: 213px; border: 1px solid #cfcfcf; border-width: 0 1px; background: #fff; font-family: Lato, sans-serif; font-size: 10.350px; letter-spacing: 0; line-height: 14px; }
.lead { margin-left: 72px; color: #111; height: 31px; }
.lead::before { content: ""; float: left; width: 1px; height: 14px; background: #222; }
.gram, .spell, .gram2, .spell2 { text-decoration: underline dotted #5a5ae0 1px; text-underline-offset: 2px; text-decoration-skip-ink: none; }
.spell { text-decoration-color: #e05a5a; }
.gram2 { text-decoration-color: #1733d6; }
.spell2 { text-decoration-color: #c02040; }
.box { background: #5b9bd5; border: 1px solid #3a73a9; color: #fff; text-align: center; }
.b-head { width: 460px; height: 42px; margin-left: 100px; padding: 8px 1px 0 0; }
.b-nav { width: 459px; height: 36px; margin: 2px 0 0 101px; padding: 5px 1px 0 0; }
.cols { display: flex; gap: 3px; margin: 2px 0 0 102px; }
.b-side { width: 150px; height: 178px; margin-top: 2px; padding-top: 26px; line-height: 23px; }
.b-main { width: 304px; height: 181px; padding: 62px 1px 0 0; line-height: 23px; }
.b-foot { width: 457px; height: 32px; margin: 2px 0 0 103px; padding: 3px 1px 0 0; }
.vscroll { margin-left: auto; width: 12px; display: flex; flex-direction: column; padding: 1px 0; }
.vscroll .sq { height: 11px; width: 11px; border: 1px solid #e4e4e4; background: #fff; display: grid; place-items: center; }
.vscroll .thumb { height: 198px; width: 11px; margin: 41px 0 auto; border: 1px solid #cfcfd4; background: #fdfdfe; }
.ibeam { position: absolute; left: 671px; top: 368px; width: 8px; height: 14px; fill: none; stroke: #444; }
.status { height: 17px; background: #2b579a; color: #fff; display: grid; grid-template-columns: 817px 29px 29px 29px 12px 77px 13px 1fr; align-items: center; padding-left: 5px; font-size: 8.100px; line-height: 15px; }
.status b { font-weight: 600; letter-spacing: -.01em; padding-top: 1px; }
.status .v { height: 17px; display: grid; place-items: center; }
.status .act { background: #1e4583; }
.status .v svg { width: 12px; height: 10px; fill: none; stroke: #fff; stroke-width: 1; }
.status .zm { font-size: 11px; font-weight: 700; text-align: center; }
.slider { height: 1px; background: #fff; display: block; }
.slider::before { content: ""; display: block; width: 3px; height: 9px; background: #fff; transform: translate(37px, -4px); }
.pct { padding-left: 8px; font-size: 8.800px; }

/* taskbars */
.tb1 { height: 31px; flex: none; display: flex; background: linear-gradient(90deg, #20363e, #24343f 60%, #1b2848 92%, #1f2942); color: #fff; }
.start { display: grid; place-items: center; }
.tb1 .start { width: 37px; }
.tb1 .start svg { width: 13px; height: 13px; }
.search { display: flex; align-items: center; }
.tb1 .search { width: 263px; height: 30px; background: #f3f2f5; color: #444; font-size: 11.400px; padding-left: 9px; }
.tb1 .search .m { width: 13px; height: 13px; }
.tb1 .search span { margin-left: 8.500px; padding-top: 1px; }
.search .castle { margin-left: auto; }
.tb1 .castle { width: 60px; height: 30px; }
.apps { display: flex; }
.apps a { display: grid; place-items: center; height: 100%; background-repeat: no-repeat; background-position: bottom; }
.apps .run { background-image: linear-gradient(#76b9ed, #76b9ed); }
.tb1 .apps a { width: 37.650px; background-size: 30px 2px; }
.tb1 .apps svg { width: 18px; height: 18px; }
.tb1 .apps svg.s13 { width: 13px; height: 13px; }
.tb1 .alert { background: #a9683a; box-shadow: inset 0 -2px #f07818; border-right: 1px solid #24343f; }
.tb1 .cur { background: #4b5866; box-shadow: inset 0 -2px #76b9ed; }
.skype { width: 22px; height: 22px; border-radius: 9px 11px 9px 11px; background: linear-gradient(135deg, #13b8f2, #0a78d0); display: grid; place-items: center; font-size: 15px; line-height: 20px; font-weight: 700; letter-spacing: 0; }
.tb1 .skype { width: 17px; height: 17px; font-size: 11px; line-height: 16px; }
.zoomapp { width: 24px; height: 24px; border-radius: 9px; background: linear-gradient(135deg, #1a6bff, #0a49f0); display: grid; place-items: center; font-size: 7px; line-height: 20px; padding-bottom: 2px; font-weight: 700; }
.wordapp { display: grid; grid-template-columns: 9px 7px; align-items: center; }
.wordapp b { height: 17px; background: #2b579a; font-size: 8px; line-height: 16px; text-align: center; letter-spacing: 0; }
.wordapp i { height: 13px; border: 1px solid #fff; background: repeating-linear-gradient(#fff 0 1px, #2b579a 1px 2px, #fff 2px 3px); }
.tray { display: grid; align-items: center; justify-items: center; }
.tb1 .tray { width: 232px; margin-left: auto; grid-template-columns: 17px 35px 25px 12px 24px 21px 60px 27px 1fr; font-size: 10.800px; }
.w18 { width: 18px; height: 13px; }
.w10 { width: 9px; height: 6px; }
.w12 { width: 12px; height: 8px; }
.w13 { width: 13px; height: 15px; }
.w16 { width: 16px; height: 16px; }
.w12t { width: 11px; height: 15px; }
.w24 { width: 24px; height: 24px; }
.tb1 .w12 { width: 10px; height: 12px; }
.tb1 .w13 { width: 13px; height: 11px; }
.tb1 .eng { font-size: 9.300px; }
.tb1 .clock { font-size: 9.300px; line-height: 13.500px; text-align: center; white-space: nowrap; }
.bell { position: relative; width: 14px; height: 14px; margin-right: 4px; }
.bell svg { width: 14px; height: 14px; }
.bell em { position: absolute; left: 5px; top: 4px; width: 13px; height: 13px; border-radius: 50%; background: #2b3346; border: 1px solid #888; font-size: 9px; line-height: 11px; text-align: center; }
.peek { width: 1px; height: 100%; background: #8a8f9c; justify-self: end; }
.tb1 .peek { margin-right: 3px; }

.tb2 { height: 40px; flex: none; display: flex; background: #1f1f1f; color: #fff; }
.tb2 .start { width: 48px; }
.tb2 .start svg { width: 16px; height: 16px; }
.tb2 .search { width: 344px; background: #333; border: 1px solid #5c5c5c; color: #d0d0d0; font-size: 14.700px; padding-left: 11px; }
.tb2 .search .m { width: 17px; height: 17px; color: #eee; }
.tb2 .search span { margin-left: 11px; padding-top: 1px; }
.tb2 .castle { width: 77px; height: 38px; }
.tb2 .apps a { width: 49px; background-size: 40px 2px; }
.tb2 .apps a:first-child { width: 48px; }
.tb2 .apps a:nth-child(2) { width: 50px; padding-right: 2px; }
.tb2 .apps svg { width: 24px; height: 24px; }
.tb2 .apps svg.s16 { width: 16px; height: 16px; }
.tb2 .cur { background: #494949; box-shadow: inset 0 -2px #76b9ed; }
.tb2 .tray { width: 417px; margin-left: auto; grid-template-columns: 28px 60px 26px 24px 24px 23px 25px 24px 25px 33px 74px 36px 1fr; font-size: 13.800px; }
.tb2 .rain { justify-self: start; margin-left: 5px; }
.tb2 .clock { font-size: 12px; line-height: 18px; text-align: center; white-space: nowrap; }
.tb2 .eng { font-size: 12px; }
.tb2 .peek { margin-right: 4px; background: #666; }

/* chat */
.chat { width: 320px; border-left: 1px solid #e9e9ef; display: flex; flex-direction: column; background: #fff; }
.chat-head { height: 46px; flex: none; display: flex; align-items: center; padding-left: 18px; font-size: 12.900px; color: #222230; }
.chat-head svg { width: 10px; height: 6px; fill: none; stroke: #6e7680; stroke-width: 1.700; }
.chat-head b { flex: 1; text-align: center; padding: 0 29px 2px 0; }
.feed { height: 513px; flex: none; display: flex; justify-content: space-between; }
.list { display: flex; flex-direction: column; padding-left: 20px; }
.msg { height: 73px; flex: none; display: flex; gap: 10px; }
.av { width: 28px; height: 28px; margin-top: 25px; border-radius: 7px; color: #fff; font-size: 12.300px; line-height: 26px; text-align: center; }
.a1 { background: #f39c12; } .a2 { background: #34495e; } .a3 { background: #2980b9; } .a4 { background: #d35400; } .a5 { background: #16a085; }
.msg p { font-size: 13px; line-height: 18px; padding-top: 2px; height: 22px; color: #747487; letter-spacing: -.025em; }
.msg a { color: #0e71eb; }
.msg span { display: inline-block; height: 37px; line-height: 36px; padding: 0 10.300px; border-radius: 12px; background: #f2f2f7; color: #232333; font-size: 15px; letter-spacing: -.02em; }
.msg.me span { background: #dff0ff; }
.track { width: 8px; margin-right: 2px; background: #f2f2f7; border-radius: 4px; height: 513px; }
.track i { display: block; width: 8px; height: 52px; background: #b0b0b8; border-radius: 4px; transform: translateY(459px); }
.info { height: 25px; flex: none; background: #f7f7fb; border-bottom: 1px solid #e4e6f2; display: flex; align-items: center; padding-left: 38px; gap: 3px; font-size: 12px; color: #6e6e82; }
.info svg { width: 14px; height: 14px; fill: none; stroke: #7d7d90; stroke-width: 1.100; }
.info svg .sh { fill: #0e72ed; stroke: none; }
.to { display: flex; align-items: center; height: 23px; margin: 12px 19px 0 16px; font-size: 12px; color: #333; }
.to span { width: 24px; padding-bottom: 2px; }
.to button { width: 73px; height: 23px; border: 0; border-radius: 6px; background: #0e72ed; color: #fff; font: 11.200px "Noto Sans", sans-serif; letter-spacing: -.026em; display: flex; align-items: center; justify-content: center; gap: 5px; padding-bottom: 1px; }
.to button svg { width: 8px; height: 6px; fill: none; stroke: #fff; stroke-width: 1.400; margin-top: 3px; }
.tools { margin-left: auto; display: flex; gap: 9px; }
.tools svg { width: 14px; height: 14px; fill: none; stroke: #74748a; }
.tools .d { fill: #74748a; stroke: none; }
.ph { margin: 6px 0 0 16px; font-size: 13px; line-height: 18px; color: #747487; letter-spacing: -.024em; }
```
